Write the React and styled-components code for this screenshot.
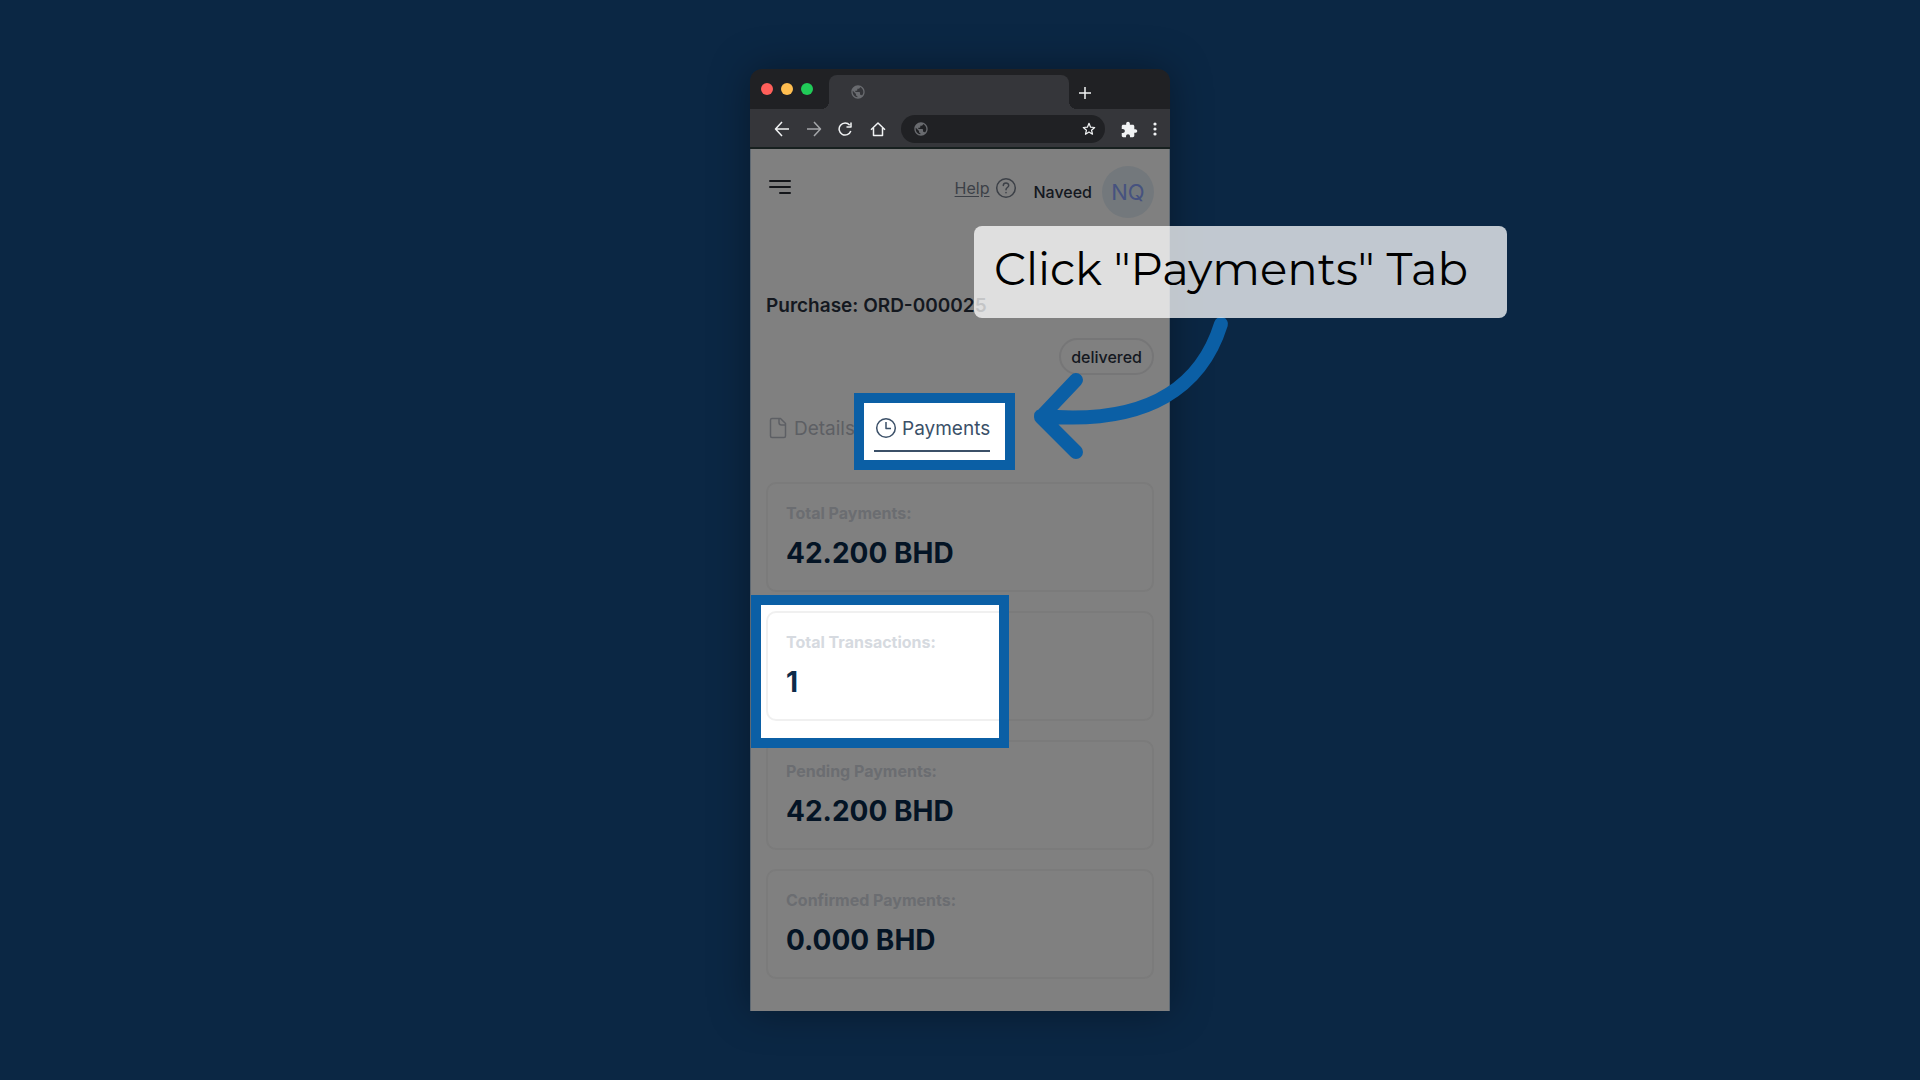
import React from 'react';
import styled, { createGlobalStyle, css } from 'styled-components';

const Global = createGlobalStyle`
  *, *::before, *::after { box-sizing: border-box; }
  body { margin: 0; background: #0b2744; font-family: Inter, "Liberation Sans", sans-serif; }
  button, input { font: inherit; color: inherit; border: 0; padding: 0; background: none; }
  svg { display: block; flex: none; }
  h1, p, dl, dt, dd { margin: 0; }
`;

const Stage = styled.main`
  min-height: 100vh;
  display: flex;
  align-items: center;
  justify-content: center;
`;

const Browser = styled.section`
  position: relative;
  width: 420px;
  max-width: 100%;
  border-radius: 12px 12px 0 0;
  box-shadow: 0 0 40px rgba(0, 0, 0, 0.35);
`;

const TabStrip = styled.div`
  display: flex;
  align-items: flex-end;
  height: 40px;
  background: #202124;
  border-radius: 12px 12px 0 0;
`;

const Lights = styled.div`
  display: flex;
  gap: 8px;
  width: 79px;
  padding: 0 0 14px 11px;
`;

const Light = styled.span`
  width: 12px;
  height: 12px;
  border-radius: 50%;
  background: ${(p) => p.$color};
`;

const BrowserTab = styled.div`
  position: relative;
  flex: 1;
  display: flex;
  align-items: center;
  height: 34px;
  padding-left: 21px;
  background: #35363a;
  border-radius: 8px 8px 0 0;
  color: #696b6f;
  &::before, &::after {
    content: '';
    position: absolute;
    bottom: 0;
    width: 8px;
    height: 8px;
  }
  &::before { right: 100%; background: radial-gradient(circle at 0 0, transparent 8px, #35363a 8px); }
  &::after { left: 100%; background: radial-gradient(circle at 100% 0, transparent 8px, #35363a 8px); }
`;

const NewTab = styled.button`
  width: 101px;
  height: 34px;
  padding: 2px 0 0 8px;
  color: #f1f3f4;
`;

const Toolbar = styled.div`
  display: flex;
  align-items: center;
  height: 40px;
  padding: 2px 10px 0 24px;
  background: #35363a;
  border-bottom: 2px solid #17201f;
`;

const NavButtons = styled.div`
  display: flex;
  gap: 16px;
  margin-right: 15px;
`;

const NavButton = styled.button`
  color: ${(p) => (p.$muted ? '#a5a7aa' : '#f1f3f4')};
`;

const Address = styled.div`
  flex: 1;
  display: flex;
  align-items: center;
  gap: 8px;
  min-width: 0;
  height: 28px;
  padding: 0 9px 0 12px;
  border-radius: 14px;
  background: #202124;
  color: #696b6f;
`;

const AddressInput = styled.input`
  flex: 1;
  min-width: 0;
  outline: 0;
`;

const Tools = styled.div`
  display: flex;
  align-items: center;
  gap: 12px;
  margin-left: 16px;
`;

const Page = styled.div`
  padding: 17px 15px 32px;
  background: #808080;
  border: 1px solid #5f6973;
  border-width: 0 1px;
  color: #14181f;
`;

const Header = styled.header`
  display: flex;
  align-items: flex-start;
`;

const MenuButton = styled.button`
  height: 42px;
  padding: 0 2px;
  color: #14161a;
`;

const HelpLink = styled.a`
  display: flex;
  align-items: center;
  gap: 6px;
  height: 44px;
  margin: 0 16px 0 auto;
  color: #3c4047;
  font-size: 16px;
  text-decoration: none;
  span { text-decoration: underline; text-underline-offset: 2px; }
`;

const User = styled.div`
  display: flex;
  align-items: center;
  gap: 10px;
  font-size: 16px;
  font-weight: 500;
`;

const Avatar = styled.span`
  display: grid;
  place-items: center;
  width: 52px;
  height: 52px;
  border-radius: 50%;
  background: #73787c;
  color: #46527f;
  font-size: 22px;
  font-weight: 400;
`;

const Title = styled.h1`
  margin-top: 74px;
  font-size: 19px;
  line-height: 28px;
  font-weight: 600;
`;

const StatusRow = styled.div`
  display: flex;
  justify-content: flex-end;
  margin-top: 18px;
`;

const Status = styled.span`
  height: 37px;
  padding: 0 10px;
  border: 2px solid #767677;
  border-radius: 19px;
  font-size: 16px;
  line-height: 34px;
  font-weight: 500;
`;

const spotlight = css`
  position: relative;
  z-index: 1;
  &::before, &::after {
    content: '';
    position: absolute;
    inset: ${(p) => p.$inset};
    width: ${(p) => p.$width};
  }
  &::before { background: #fff; z-index: -1; }
  &::after { border: 10px solid #0b5fa5; pointer-events: none; }
`;

const Tabs = styled.nav`
  display: flex;
  gap: 19px;
  margin-top: 37px;
`;

const Slot = styled.div`
  ${(p) => p.$inset && spotlight}
`;

const Tab = styled.button`
  display: flex;
  align-items: center;
  gap: 4px;
  height: 40px;
  padding-bottom: 6px;
  border-bottom: 2px solid ${(p) => (p.$active ? '#3b5068' : 'transparent')};
  color: ${(p) => (p.$active ? '#3b5068' : '#5d5f64')};
  font-size: 19px;
`;

const Cards = styled.div`
  display: grid;
  gap: 19px;
  margin-top: 30px;
`;

const Card = styled.dl`
  height: 110px;
  padding: 19px 18px;
  border: 2px solid rgba(60, 64, 70, 0.08);
  border-radius: 10px;
  dt {
    color: ${(p) => (p.$lit ? '#d6dae0' : '#6b6d71')};
    font-size: 16px;
    line-height: 20px;
    font-weight: 700;
  }
  dd {
    margin-top: 12px;
    color: ${(p) => (p.$lit ? '#0d2b4a' : '#041425')};
    font-size: 28px;
    line-height: 36px;
    font-weight: 700;
  }
`;

const Callout = styled.p`
  position: absolute;
  z-index: 3;
  top: 157px;
  left: 224px;
  width: 533px;
  height: 92px;
  padding-left: 20px;
  border-radius: 8px;
  background: rgba(255, 255, 255, 0.75);
  color: #000;
  font-family: Montserrat, Inter, sans-serif;
  font-size: 45px;
  line-height: 86px;
  font-weight: 400;
  white-space: nowrap;
`;

const Arrow = styled.svg`
  position: absolute;
  z-index: 2;
  top: 241px;
  left: 280px;
`;

const Globe = () => (
  <svg width="16" height="16" viewBox="0 0 24 24" fill="currentColor" aria-hidden="true">
    <path d="M12 2C6.480 2 2 6.480 2 12s4.480 10 10 10 10-4.480 10-10S17.520 2 12 2zm-1 17.930c-3.950-.49-7-3.850-7-7.930 0-.62.080-1.210.210-1.790L9 15v1c0 1.100.9 2 2 2v1.930zm6.900-2.540c-.26-.81-1-1.390-1.900-1.390h-1v-3c0-.55-.45-1-1-1H8v-2h2c.55 0 1-.45 1-1V7h2c1.100 0 2-.9 2-2v-.41c2.930 1.190 5 4.060 5 7.410 0 2.080-.8 3.970-2.100 5.390z" />
  </svg>
);

const Line = ({ d, size = 16, width = 1.5, box = 16 }) => (
  <svg width={size} height={size} viewBox={`0 0 ${box} ${box}`} fill="none" stroke="currentColor" strokeWidth={width} strokeLinejoin="round" aria-hidden="true">
    <path d={d} />
  </svg>
);

const cards = [
  { label: 'Total Payments:', value: '42.200 BHD' },
  { label: 'Total Transactions:', value: '1', lit: true },
  { label: 'Pending Payments:', value: '42.200 BHD' },
  { label: 'Confirmed Payments:', value: '0.000 BHD' },
];

export default function App() {
  return (
    <>
      <Global />
      <Stage>
        <Browser>
          <TabStrip>
            <Lights>
              <Light $color="#ff5f5a" />
              <Light $color="#ffbe50" />
              <Light $color="#20cb58" />
            </Lights>
            <BrowserTab><Globe /></BrowserTab>
            <NewTab aria-label="New tab"><Line d="M8 2v12M2 8h12" /></NewTab>
          </TabStrip>
          <Toolbar>
            <NavButtons>
              <NavButton aria-label="Back"><Line d="M15 8H1.500M8 1L1.500 8L8 15" /></NavButton>
              <NavButton aria-label="Forward" $muted><Line d="M1 8H14.500M8 1L14.500 8L8 15" /></NavButton>
              <NavButton aria-label="Reload"><Line d="M12.800 10A6 6 0 1 1 11.700 4.200M13 1.500V6H8.500" /></NavButton>
              <NavButton aria-label="Home"><Line d="M1 8.700L8 2L15 8.700M3.500 7V14.500H12.500V7" /></NavButton>
            </NavButtons>
            <Address>
              <Globe />
              <AddressInput aria-label="Address" />
              <NavButton aria-label="Bookmark">
                <Line width={1.4} size={14} d="M8 1.500l1.800 4.400 4.700.4-3.600 3.100 1.100 4.600L8 11.500l-4 2.500 1.100-4.600L1.500 6.300l4.700-.4z" />
              </NavButton>
            </Address>
            <Tools>
              <NavButton aria-label="Extensions">
                <svg width="17" height="17" viewBox="1 0 23 23" fill="currentColor" aria-hidden="true">
                  <path d="M20.500 11H19V7c0-1.100-.9-2-2-2h-4V3.500C13 2.120 11.880 1 10.500 1S8 2.120 8 3.500V5H4c-1.100 0-1.990.9-1.990 2v3.800H3.500c1.490 0 2.700 1.210 2.700 2.700s-1.210 2.700-2.700 2.700H2V20c0 1.100.9 2 2 2h3.800v-1.500c0-1.490 1.210-2.700 2.700-2.700s2.700 1.210 2.700 2.700V22H17c1.100 0 2-.9 2-2v-4h1.500c1.380 0 2.500-1.120 2.500-2.500S21.880 11 20.500 11z" />
                </svg>
              </NavButton>
              <NavButton aria-label="More">
                <svg width="10" height="16" viewBox="0 0 10 16" fill="currentColor" aria-hidden="true">
                  <circle cx="5" cy="3" r="1.600" /><circle cx="5" cy="8" r="1.600" /><circle cx="5" cy="13" r="1.600" />
                </svg>
              </NavButton>
            </Tools>
          </Toolbar>
          <Page>
            <Header>
              <MenuButton aria-label="Menu">
                <svg width="24" height="16" viewBox="0 0 24 16" fill="none" stroke="currentColor" strokeWidth="2" strokeLinecap="round" aria-hidden="true">
                  <path d="M2 2h20M2 8h20M12 14h10" />
                </svg>
              </MenuButton>
              <HelpLink href="#help">
                <span>Help</span>
                <svg width="22" height="22" viewBox="0 0 22 22" fill="none" stroke="currentColor" strokeWidth="1.500" strokeLinecap="round" aria-hidden="true">
                  <circle cx="11" cy="11" r="9.300" />
                  <path d="M8.300 8.600C8.300 5.200 13.700 5.200 13.700 8.500C13.700 10.500 11 10.500 11 12.700M11 15.600v.2" />
                </svg>
              </HelpLink>
              <User>Naveed<Avatar>NQ</Avatar></User>
            </Header>
            <Title>Purchase: ORD-000025</Title>
            <StatusRow><Status>delivered</Status></StatusRow>
            <Tabs>
              <Slot>
                <Tab>
                  <Line size={24} box={24} d="M6 2.500h8.500l5 5V20a1.500 1.500 0 0 1-1.500 1.500H6A1.500 1.500 0 0 1 4.500 20V4A1.500 1.500 0 0 1 6 2.500zM13 2.500V6.500A2.500 2.500 0 0 0 15.500 9H19.500" />
                  Details
                </Tab>
              </Slot>
              <Slot $inset="-19px -25px -18px -20px" $width="auto">
                <Tab $active>
                  <Line size={24} box={24} d="M12 2.700a9.300 9.300 0 1 0 0 18.600a9.300 9.300 0 1 0 0-18.600zM12 6v6.500h5" />
                  Payments
                </Tab>
              </Slot>
            </Tabs>
            <Cards>
              {cards.map(({ label, value, lit }) => (
                <Slot key={label} $inset={lit && '-16px auto -27px -15px'} $width="258px">
                  <Card $lit={lit}>
                    <dt>{label}</dt>
                    <dd>{value}</dd>
                  </Card>
                </Slot>
              ))}
            </Cards>
          </Page>
          <Callout>Click "Payments" Tab</Callout>
          <Arrow width="210" height="160" viewBox="1030 310 210 160" fill="none" stroke="#0b5fa5" strokeWidth="14" strokeLinecap="round" strokeLinejoin="round" aria-hidden="true">
            <path d="M1221 324C1202 385 1150 426 1041 416M1076 380L1041 417L1076 452" />
          </Arrow>
        </Browser>
      </Stage>
    </>
  );
}
